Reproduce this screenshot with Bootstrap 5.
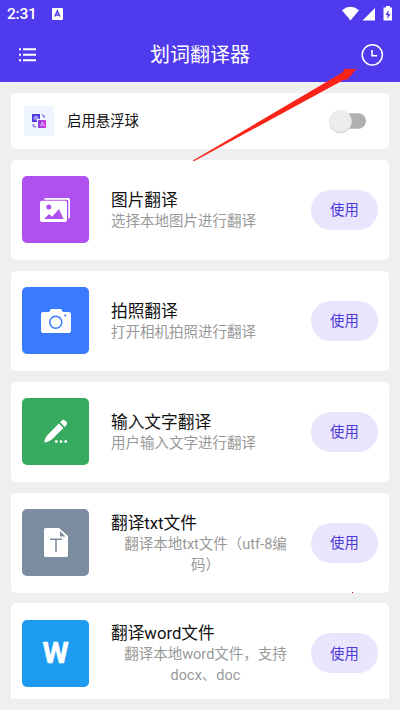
<!DOCTYPE html>
<html lang="zh-CN">
<head>
<meta charset="utf-8">
<meta name="viewport" content="width=device-width, initial-scale=1">
<title>划词翻译器</title>
<link href="https://cdn.jsdelivr.net/npm/bootstrap@5.3.0/dist/css/bootstrap.min.css" rel="stylesheet">
<style>
body{font-family:Roboto,"Noto Sans CJK SC",sans-serif;background:#efeff1;color:#111}
.screen{width:400px;height:710px}
.app-head{background:#4f3bed;height:82px}
.status{height:27px;padding:0 7px 0 7px}
.clock{font-size:15.5px;font-weight:500;line-height:27px;width:45px;padding-top:2px;letter-spacing:-.2px}
.app-bar{height:55px;padding:0 16px 0 19px}
.app-title{font-size:20px;line-height:28px;margin-left:3px}
.feed{padding:11px 11px 0;gap:10.9px;height:617px}
.feed .card{border:0;border-radius:5px;flex:none}
.toggle-card{height:56px;padding:0 23px 0 12.5px}
.float-icon{width:30px;height:30px;background:#eff5ff}
.float-label{font-size:14.4px;margin-left:13.5px;padding-top:2px}
.toggle{width:37px;height:24px}
.tool{height:100px;padding:0 11px}
.tile{width:67px;height:67px;border-radius:5px;flex:none}
.tool-text{width:189px;margin-left:22px;padding-top:3px;line-height:21px}
.tool-name{font-size:16.7px}
.tool-desc{font-size:14.5px;color:#999}
.use{width:67px;height:40px;border-radius:20px;background:#e9e5fd;color:#4f3bd8;font-size:14.4px;padding:2px 0 0;margin-left:auto}
.c-photo{background:#b150f1}.c-camera{background:#3b79fd}.c-write{background:#36aa5e}.c-txt{background:#7d8da1}.c-word{background:#1d9bf0}
.w-mark{font:700 30px/30px Roboto,sans-serif;-webkit-text-stroke:.5px #fff}
.pointer{left:0;top:0;pointer-events:none}
svg{display:block}
</style>
</head>
<body>
<main class="screen position-relative overflow-hidden">
  <header class="app-head text-white">
    <div class="status d-flex align-items-center">
      <span class="clock">2:31</span>
      <svg width="11" height="12" viewBox="0 0 11 12"><rect width="11" height="12" rx="1" fill="#fff"/><path d="M2.8 8.5 5.3 3l2.6 5.5M3.8 7h3" fill="none" stroke="#4f3bed" stroke-width="1.5"/></svg>
      <svg class="ms-auto" width="51" height="16" viewBox="0 0 51 16"><g fill="#fff"><path d="M0 4.2Q8.500-2.500 17 4.200L8.500 14.500Z"/><path d="M33 2v12.500H20.500Z"/><path d="M44 0h4v1.500h2v13h-8.500v-13H44Z"/></g><path d="M46.500 4 43.500 9h2v4l3-5h-2Z" fill="#4f3bed"/></svg>
    </div>
    <div class="app-bar d-flex align-items-center justify-content-between">
      <svg width="18" height="16" viewBox="0 0 18 16"><g stroke="#fff" stroke-width="2.100"><path d="M4 2.200h13M4 7.800h13M4 13.300h13"/><path d="M0 2.200h2M0 7.800h2M0 13.300h2"/></g></svg>
      <span class="app-title">划词翻译器</span>
      <svg width="24" height="24" viewBox="0 0 24 24" fill="none" stroke="#fff"><circle cx="12.300" cy="11.800" r="10.100" stroke-width="1.500"/><path d="M12 7v5.700h5.200" stroke-width="1.600"/></svg>
    </div>
  </header>

  <section class="feed d-flex flex-column overflow-hidden">
    <div class="card toggle-card flex-row align-items-center">
      <div class="float-icon d-flex align-items-center justify-content-center">
        <svg width="16" height="16" viewBox="0 0 16 16"><defs><linearGradient id="mix" x1="0" y1="0" x2="1" y2="0"><stop offset="0" stop-color="#8045d8"/><stop offset="1" stop-color="#e33ee4"/></linearGradient></defs><path d="M1 1h8v5H6v3H1Z" fill="#5036df"/><path d="M7 7h8v8H7Z" fill="url(#mix)"/><path d="M3 4h4v2H3ZM5 2.500v5M9.500 13l1.800-4 1.800 4M10 12h2.500" stroke="#d9cfff" stroke-width=".8" fill="none"/><path d="M11 2q2 0 2.500 3M2 11q0 3 3 3" fill="none" stroke="#8260dc" stroke-width="1.100"/></svg>
      </div>
      <span class="float-label">启用悬浮球</span>
      <svg class="toggle ms-auto" viewBox="0 0 37 24"><rect x="8" y="4.300" width="29" height="15.400" rx="7.700" fill="#b0b0b0"/><circle cx="11.500" cy="12.900" r="11.100" fill="#c9c9c9"/><circle cx="11.500" cy="12" r="11.100" fill="#ececec"/></svg>
    </div>

    <div class="card tool flex-row align-items-center">
      <div class="tile c-photo d-flex align-items-center justify-content-center">
        <svg width="31" height="26" viewBox="0 0 31 26"><path d="M4 2.700Q4 1 5.700 1H28.300Q30 1 30 2.700V20.300Q30 21.500 28.300 21.800V4.200Q28.300 2.700 26.800 2.700Z" fill="#fff"/><rect y="3.800" width="27" height="21.200" rx="2" fill="#fff"/><circle cx="8.800" cy="10" r="2.500" fill="#b150f1"/><path d="M4 22 9 17 12 19.800 19 12l4.500 10Z" fill="#b150f1"/></svg>
      </div>
      <div class="tool-text"><div class="tool-name">图片翻译</div><div class="tool-desc">选择本地图片进行翻译</div></div>
      <button class="btn use" type="button">使用</button>
    </div>

    <div class="card tool flex-row align-items-center">
      <div class="tile c-camera d-flex align-items-center justify-content-center">
        <svg width="30" height="24" viewBox="0 0 30 24"><path d="M2 3h6l2-3h10l2 3h6q2 0 2 2v17q0 2-2 2H2q-2 0-2-2V5q0-2 2-2Z" fill="#fff"/><circle cx="14.800" cy="13.300" r="6" fill="none" stroke="#3b79fd" stroke-width="1.400"/><circle cx="24.300" cy="6.500" r="1.100" fill="#3b79fd"/></svg>
      </div>
      <div class="tool-text"><div class="tool-name">拍照翻译</div><div class="tool-desc">打开相机拍照进行翻译</div></div>
      <button class="btn use" type="button">使用</button>
    </div>

    <div class="card tool flex-row align-items-center">
      <div class="tile c-write d-flex align-items-center justify-content-center">
        <svg width="24" height="25" viewBox="0 0 24 25" fill="#fff"><path d="M14.800 4.500 19.500 9 7.500 20.800Q4.500 23 .5 23.700 .3 19.500 3.500 16ZM16.200 3.200l1.800-1.900q1.500-1.300 3.500.4 2.500 2 1.200 4l-2 2.200Z"/><rect x="11" y="21.200" width="2.600" height="2.500" rx=".6"/><rect x="15.700" y="21.200" width="2.600" height="2.500" rx=".6"/><rect x="20.400" y="21.200" width="2.600" height="2.500" rx=".6"/></svg>
      </div>
      <div class="tool-text"><div class="tool-name">输入文字翻译</div><div class="tool-desc">用户输入文字进行翻译</div></div>
      <button class="btn use" type="button">使用</button>
    </div>

    <div class="card tool flex-row align-items-center">
      <div class="tile c-txt d-flex align-items-center justify-content-center">
        <svg width="24" height="29" viewBox="0 0 24 29"><path d="M1.500 0H15l9 8v19.500q0 1.500-1.500 1.500h-21Q0 29 0 27.500v-26Q0 0 1.500 0Z" fill="#fff"/><path d="M16 3v5.500h5.500ZM6 10.600h12v1.500h-5.200V24h-1.600V12.100H6Z" fill="#7d8da1"/></svg>
      </div>
      <div class="tool-text"><div class="tool-name">翻译txt文件</div><div class="tool-desc text-center">翻译本地txt文件（utf-8编<br>码）</div></div>
      <button class="btn use" type="button">使用</button>
    </div>

    <div class="card tool flex-row align-items-center">
      <div class="tile c-word d-flex align-items-center justify-content-center text-white"><span class="w-mark">W</span></div>
      <div class="tool-text"><div class="tool-name">翻译word文件</div><div class="tool-desc text-center">翻译本地word文件，支持<br>docx、doc</div></div>
      <button class="btn use" type="button">使用</button>
    </div>
  </section>

  <svg class="pointer position-absolute" width="400" height="710" viewBox="0 0 400 710"><path d="M193 160.500 342.500 72.500 344.500 68.800 356.500 69 347.500 79.500 344 79.800 194 161.200Z" fill="#fb2419"/><rect x="352" y="592" width="1" height="1" fill="#b01030"/></svg>
</main>
<script src="https://cdn.jsdelivr.net/npm/bootstrap@5.3.0/dist/js/bootstrap.bundle.min.js"></script>
</body>
</html>
